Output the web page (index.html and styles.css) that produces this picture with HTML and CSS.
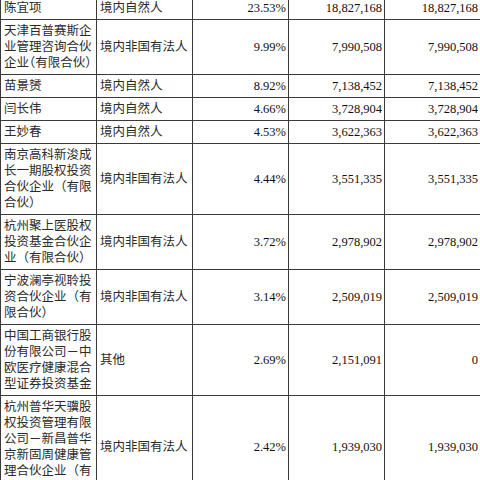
FILE: index.html
```html
<!DOCTYPE html>
<html lang="zh-CN">
<head>
<meta charset="utf-8">
<title>股东持股情况</title>
<link rel="stylesheet" href="styles.css">
</head>
<body>
<table class="holders">
  <colgroup>
    <col class="c"><col class="c"><col class="c"><col class="c"><col class="c">
  </colgroup>
  <tbody>
    <tr>
      <td class="name">陈宜项</td>
      <td class="type">境内自然人</td>
      <td class="num">23.53%</td>
      <td class="num">18,827,168</td>
      <td class="num">18,827,168</td>
    </tr>
    <tr>
      <td class="name">天津百普赛斯企<br>业管理咨询合伙<br><span class="fit">企业（有限合伙）</span></td>
      <td class="type">境内非国有法人</td>
      <td class="num">9.99%</td>
      <td class="num">7,990,508</td>
      <td class="num">7,990,508</td>
    </tr>
    <tr>
      <td class="name">苗景赟</td>
      <td class="type">境内自然人</td>
      <td class="num">8.92%</td>
      <td class="num">7,138,452</td>
      <td class="num">7,138,452</td>
    </tr>
    <tr>
      <td class="name">闫长伟</td>
      <td class="type">境内自然人</td>
      <td class="num">4.66%</td>
      <td class="num">3,728,904</td>
      <td class="num">3,728,904</td>
    </tr>
    <tr>
      <td class="name">王妙春</td>
      <td class="type">境内自然人</td>
      <td class="num">4.53%</td>
      <td class="num">3,622,363</td>
      <td class="num">3,622,363</td>
    </tr>
    <tr>
      <td class="name">南京高科新浚成长一期股权投资合伙企业（有限合伙）</td>
      <td class="type">境内非国有法人</td>
      <td class="num">4.44%</td>
      <td class="num">3,551,335</td>
      <td class="num">3,551,335</td>
    </tr>
    <tr>
      <td class="name">杭州聚上医股权投资基金合伙企业（有限合伙）</td>
      <td class="type">境内非国有法人</td>
      <td class="num">3.72%</td>
      <td class="num">2,978,902</td>
      <td class="num">2,978,902</td>
    </tr>
    <tr>
      <td class="name">宁波澜亭视聆投资合伙企业（有限合伙）</td>
      <td class="type">境内非国有法人</td>
      <td class="num">3.14%</td>
      <td class="num">2,509,019</td>
      <td class="num">2,509,019</td>
    </tr>
    <tr>
      <td class="name">中国工商银行股份有限公司－中欧医疗健康混合型证券投资基金</td>
      <td class="type">其他</td>
      <td class="num">2.69%</td>
      <td class="num">2,151,091</td>
      <td class="num">0</td>
    </tr>
    <tr>
      <td class="name">杭州普华天骥股权投资管理有限公司－新昌普华京新固周健康管理合伙企业（有限合伙）</td>
      <td class="type">境内非国有法人</td>
      <td class="num">2.42%</td>
      <td class="num">1,939,030</td>
      <td class="num">1,939,030</td>
    </tr>
  </tbody>
</table>
</body>
</html>
```

FILE: styles.css
```css
html, body {
  margin: 0;
  padding: 0;
  background: #ffffff;
}

body {
  width: 480px;
  height: 480px;
  overflow: hidden;
}

.holders {
  width: 480px;
  margin-top: -4px;
  border-collapse: collapse;
  table-layout: fixed;
  font-family: "Liberation Serif", "Noto Sans CJK SC", serif;
  font-size: 12.5px;
  line-height: 16px;
  color: #1e1e1e;
}

.holders .c {
  width: 96px;
}

.holders td {
  border: 1px solid #3a3a3a;
  padding: 3px 2px 3px 3px;
  vertical-align: middle;
  word-break: break-all;
}

.name,
.type {
  color: #2b2b2b;
  text-align: left;
}

.num {
  text-align: right;
  color: #111111;
}

.fit {
  white-space: nowrap;
  font-feature-settings: "halt";
}
```
